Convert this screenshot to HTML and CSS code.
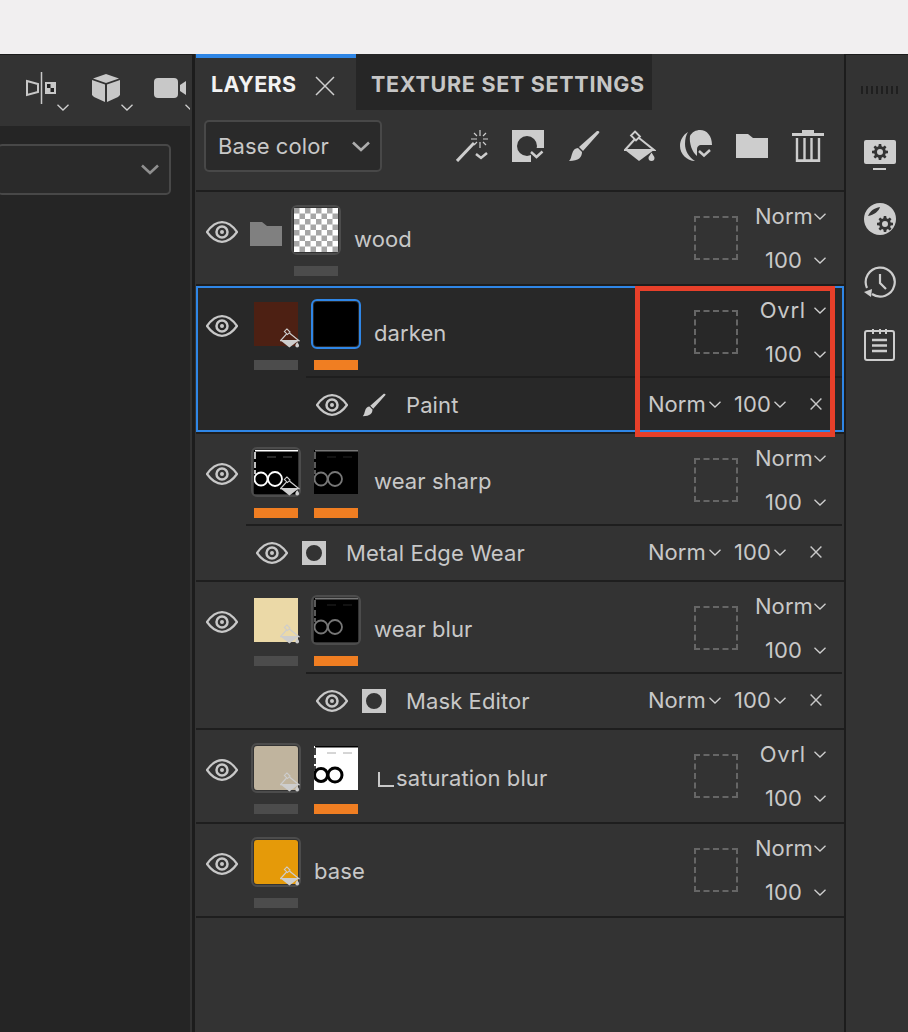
FILE: index.html
```html
<!DOCTYPE html>
<html lang="en">
<head>
	<meta charset="UTF-8">
	<title>Layers</title>
	<link rel="stylesheet" href="styles.css">
</head>
<body>
	<svg class="defs" width="0" height="0">
		<symbol id="chev" viewBox="0 0 12 7"><path d="M.5.8L6 6 11.500.8" fill="none" stroke="#cfcfcf" stroke-width="1.300"/></symbol>
		<symbol id="chev-bold" viewBox="0 0 18 11"><path d="M1 1.500l8 7.500 8-7.500" fill="none" stroke="currentColor" stroke-width="2.600"/></symbol>
		<symbol id="cross" viewBox="0 0 20 20"><path d="M1 1l18 18M19 1L1 19" fill="none" stroke="currentColor"/></symbol>
		<symbol id="eye" viewBox="0 0 32 22"><path d="M1 11C6 4 11 1.200 16 1.200S26 4 31 11C26 18 21 20.800 16 20.800S6 18 1 11Z" fill="none" stroke="#c8c8c8" stroke-width="2.200"/><circle cx="16" cy="11" r="5.500" fill="none" stroke="#c8c8c8" stroke-width="2.500"/><circle cx="16" cy="11" r="2" fill="#c8c8c8"/></symbol>
		<symbol id="folder" viewBox="0 0 32 24"><path d="M0 0h12l5 4h15v20H0Z"/></symbol>
		<symbol id="bucket" viewBox="0 0 32 32"><path d="M11 1.500l5 5-4 4-5-5Z" fill="none" stroke="#cdcdcd" stroke-width="1.800"/><path d="M11 9L1 20h29L15 8" fill="none" stroke="#cdcdcd" stroke-width="2"/><path d="M1 20h29L15 31Z" fill="#cdcdcd"/><path d="M27.500 22.500c1.500 2.500 3 4 3 5.500a3 3 0 0 1-6 0c0-1.500 1.500-3 3-5.500Z" fill="#cdcdcd"/></symbol>
		<symbol id="brush" viewBox="0 0 32 32"><path d="M30 1c1 0 2 1 1 2L15 21l-4-4L29 1Z" fill="#cdcdcd"/><path d="M10 18l4 4c0 5-3 9-13 9 2-2 2-4 3-7 1-4 3-6 6-6Z" fill="#cdcdcd"/></symbol>
		<symbol id="mask-ic" viewBox="0 0 24 24"><path fill-rule="evenodd" d="M0 0h24v24H0ZM12 4a8 8 0 1 0 0 16 8 8 0 0 0 0-16Z" fill="#c8c8c8"/></symbol>
		<symbol id="rings" viewBox="0 0 44 44"><rect class="rings-bg" width="44" height="44"/><path d="M1 .8h43M1 2v7M1 12v6M1 20v4" fill="none" stroke="currentColor" stroke-width="1.500"/><path d="M13 7h9M29 7h9" stroke="currentColor" stroke-width=".8" opacity=".4"/><circle class="ring" cx="7" cy="29" r="6.500"/><circle class="ring" cx="21" cy="29" r="7"/></symbol>
		<symbol id="checker" viewBox="0 0 44 44"><rect width="44" height="44" fill="#fff"/><path d="M0 0h5.500v5.500H0ZM11 0h5.500v5.500H11ZM22 0h5.500v5.500H22ZM33 0h5.500v5.500H33ZM5.500 5.500H11V11H5.500ZM16.500 5.500H22V11h-5.500ZM27.500 5.500H33V11h-5.500ZM38.500 5.500H44V11h-5.500ZM0 11h5.500v5.500H0ZM11 11h5.500v5.500H11ZM22 11h5.500v5.500H22ZM33 11h5.500v5.500H33ZM5.500 16.500H11V22H5.500ZM16.500 16.500H22V22h-5.500ZM27.500 16.500H33V22h-5.500ZM38.500 16.500H44V22h-5.500ZM0 22h5.500v5.500H0ZM11 22h5.500v5.500H11ZM22 22h5.500v5.500H22ZM33 22h5.500v5.500H33ZM5.500 27.500H11V33H5.500ZM16.500 27.500H22V33h-5.500ZM27.500 27.500H33V33h-5.500ZM38.500 27.500H44V33h-5.500ZM0 33h5.500v5.500H0ZM11 33h5.500v5.500H11ZM22 33h5.500v5.500H22ZM33 33h5.500v5.500H33ZM5.500 38.500H11V44H5.500ZM16.500 38.500H22V44h-5.500ZM27.500 38.500H33V44h-5.500ZM38.500 38.500H44V44h-5.500Z" fill="#a6a6a6"/></symbol>
		<symbol id="gear" viewBox="0 0 16 16"><path fill-rule="evenodd" d="M6.800 0h2.400l.4 2.300 1.300.6L12.800 1.500l1.700 1.700-1.400 1.900.6 1.300 2.300.4v2.400l-2.300.4-.6 1.300 1.400 1.900-1.700 1.700-1.900-1.400-1.300.6-.4 2.300H6.800l-.4-2.300-1.300-.6-1.900 1.400-1.700-1.700 1.400-1.900-.6-1.300L0 9.200V6.800l2.300-.4.6-1.300-1.400-1.900 1.700-1.700 1.900 1.400 1.300-.6ZM8 5a3 3 0 1 0 0 6 3 3 0 0 0 0-6Z"/></symbol>
	</svg>

	<div class="topbar"></div>

	<div class="app">
		<div class="side">
			<div class="side-tools">
				<span class="tool tool-split">
					<svg class="ic-split" viewBox="0 0 32 32"><path d="M1 9l11 3v8L1 23Z" fill="none" stroke="#c8c8c8" stroke-width="2"/><path d="M15.500 0v32" stroke="#c8c8c8" stroke-width="1.500"/><rect x="19" y="10" width="11" height="12" fill="#c8c8c8"/><path d="M21 12h3.500v4H21ZM24.500 16H28v4h-3.500Z" fill="#222"/></svg>
					<svg class="chev tool-chev"><use href="#chev"/></svg>
				</span>
				<span class="tool tool-cube">
					<svg class="ic-cube" viewBox="0 0 28 28"><path d="M14 0l13 4.500L14 9 1 4.500Z" fill="#c8c8c8"/><path d="M0 6l13 4.500V28L2 23 0 21ZM28 6l-13 4.500V28l11-5 2-2Z" fill="#c8c8c8"/></svg>
					<svg class="chev tool-chev"><use href="#chev"/></svg>
				</span>
				<span class="tool tool-cam">
					<svg class="ic-cam" viewBox="0 0 32 20"><rect width="24" height="20" rx="4" fill="#c8c8c8"/><path d="M26 7l6-4v14l-6-4Z" fill="#c8c8c8"/></svg>
					<svg class="chev tool-chev"><use href="#chev"/></svg>
				</span>
			</div>
			<div class="side-body">
				<div class="side-select"><svg class="sel-chev"><use href="#chev-bold"/></svg></div>
			</div>
		</div>

		<div class="panel">
			<div class="tabs">
				<div class="tab tab-on">LAYERS<svg class="tab-x"><use href="#cross"/></svg></div>
				<div class="tab tab-off">TEXTURE SET SETTINGS</div>
			</div>

			<div class="toolbar">
				<div class="channel">Base color<svg class="sel-chev"><use href="#chev-bold"/></svg></div>
				<div class="actions">
					<svg class="act" viewBox="0 0 32 32"><path d="M1 31L18 13" stroke="#cdcdcd" stroke-width="3"/><path d="M24 0v6M24 12v6M15 9h6M27 9h6M18 3l3 3M30 3l-3 3M18 15l3-3M30 15l-3-3" stroke="#cdcdcd" stroke-width="1.200"/><path d="M20 24l5 4 6-5" fill="none" stroke="#cdcdcd" stroke-width="2.500"/></svg>
					<svg class="act" viewBox="0 0 32 32"><rect width="32" height="32" fill="#cdcdcd"/><circle cx="15" cy="16" r="10" fill="#333"/><rect x="19" y="18" width="13" height="14" fill="#333"/><path d="M19 22l5.500 5 6-5.500" fill="none" stroke="#cdcdcd" stroke-width="2.500"/></svg>
					<svg class="act"><use href="#brush"/></svg>
					<svg class="act"><use href="#bucket"/></svg>
					<svg class="act" viewBox="0 0 32 32"><path d="M8 2C3 5 0 10 0 16c0 8 7 15 15 15C9 27 5 21 5 14 5 9 6 5 8 2Z" fill="#cdcdcd"/><path d="M10 6c2-4 6-6 10-6 7 0 12 6 12 15H22c-4 0-5 2-5 5v6C12 22 9 13 10 6Z" fill="#cdcdcd"/><path d="M19 21l5 4.500 6-5.500" fill="none" stroke="#cdcdcd" stroke-width="2.500"/></svg>
					<svg class="act act-folder"><use href="#folder"/></svg>
					<svg class="act" viewBox="0 0 32 32"><path d="M10 3V0h12v3h10v3H0V3Z" fill="#cdcdcd"/><path d="M5 8v23h22V8M12.500 8v23M19.500 8v23" fill="none" stroke="#cdcdcd" stroke-width="2.400"/><path d="M4 30.500h24" stroke="#cdcdcd" stroke-width="2.400"/></svg>
				</div>
			</div>

			<div class="layers">
				<div class="layer">
					<div class="layer-main">
						<svg class="eye"><use href="#eye"/></svg>
						<svg class="folder"><use href="#folder"/></svg>
						<div class="slot slot-folder">
							<div class="thumb framed"><svg class="thumb-art"><use href="#checker"/></svg></div>
							<div class="bar"></div>
						</div>
						<span class="name">wood</span>
						<div class="controls">
							<div class="dash"></div>
							<div class="blend">
								<div class="pick"><span>Norm</span><svg class="chev"><use href="#chev"/></svg></div>
								<div class="pick"><span>100</span><svg class="chev chev-far"><use href="#chev"/></svg></div>
							</div>
						</div>
					</div>
				</div>

				<div class="layer layer-sel has-sub">
					<div class="layer-main">
						<svg class="eye"><use href="#eye"/></svg>
						<div class="slot">
							<div class="thumb thumb-brown"><svg class="fill-ic"><use href="#bucket"/></svg></div>
							<div class="bar"></div>
						</div>
						<div class="slot">
							<div class="thumb thumb-black framed framed-on"></div>
							<div class="bar bar-on"></div>
						</div>
						<span class="name">darken</span>
						<div class="controls">
							<div class="dash"></div>
							<div class="blend">
								<div class="pick"><span class="ovrl">Ovrl</span><svg class="chev"><use href="#chev"/></svg></div>
								<div class="pick"><span>100</span><svg class="chev chev-far"><use href="#chev"/></svg></div>
							</div>
						</div>
					</div>
					<div class="sub sub-deep">
						<svg class="eye"><use href="#eye"/></svg>
						<svg class="sub-ic"><use href="#brush"/></svg>
						<span class="sub-name">Paint</span>
						<div class="sub-ctl">
							<div class="pick"><span>Norm</span><svg class="chev"><use href="#chev"/></svg></div>
							<div class="pick"><span>100</span><svg class="chev"><use href="#chev"/></svg></div>
							<svg class="sub-x"><use href="#cross"/></svg>
						</div>
					</div>
				</div>

				<div class="layer has-sub">
					<div class="layer-main">
						<svg class="eye"><use href="#eye"/></svg>
						<div class="slot">
							<div class="thumb framed thumb-white"><svg class="thumb-art"><use href="#rings"/></svg><svg class="fill-ic"><use href="#bucket"/></svg></div>
							<div class="bar bar-on"></div>
						</div>
						<div class="slot">
							<div class="thumb thumb-grey"><svg class="thumb-art"><use href="#rings"/></svg></div>
							<div class="bar bar-on"></div>
						</div>
						<span class="name">wear sharp</span>
						<div class="controls">
							<div class="dash"></div>
							<div class="blend">
								<div class="pick"><span>Norm</span><svg class="chev"><use href="#chev"/></svg></div>
								<div class="pick"><span>100</span><svg class="chev chev-far"><use href="#chev"/></svg></div>
							</div>
						</div>
					</div>
					<div class="sub sub-near">
						<svg class="eye"><use href="#eye"/></svg>
						<svg class="sub-ic"><use href="#mask-ic"/></svg>
						<span class="sub-name">Metal Edge Wear</span>
						<div class="sub-ctl">
							<div class="pick"><span>Norm</span><svg class="chev"><use href="#chev"/></svg></div>
							<div class="pick"><span>100</span><svg class="chev"><use href="#chev"/></svg></div>
							<svg class="sub-x"><use href="#cross"/></svg>
						</div>
					</div>
				</div>

				<div class="layer has-sub">
					<div class="layer-main">
						<svg class="eye"><use href="#eye"/></svg>
						<div class="slot">
							<div class="thumb thumb-cream"><svg class="fill-ic"><use href="#bucket"/></svg></div>
							<div class="bar"></div>
						</div>
						<div class="slot">
							<div class="thumb framed thumb-grey"><svg class="thumb-art"><use href="#rings"/></svg></div>
							<div class="bar bar-on"></div>
						</div>
						<span class="name">wear blur</span>
						<div class="controls">
							<div class="dash"></div>
							<div class="blend">
								<div class="pick"><span>Norm</span><svg class="chev"><use href="#chev"/></svg></div>
								<div class="pick"><span>100</span><svg class="chev chev-far"><use href="#chev"/></svg></div>
							</div>
						</div>
					</div>
					<div class="sub sub-deep">
						<svg class="eye"><use href="#eye"/></svg>
						<svg class="sub-ic"><use href="#mask-ic"/></svg>
						<span class="sub-name">Mask Editor</span>
						<div class="sub-ctl">
							<div class="pick"><span>Norm</span><svg class="chev"><use href="#chev"/></svg></div>
							<div class="pick"><span>100</span><svg class="chev"><use href="#chev"/></svg></div>
							<svg class="sub-x"><use href="#cross"/></svg>
						</div>
					</div>
				</div>

				<div class="layer">
					<div class="layer-main">
						<svg class="eye"><use href="#eye"/></svg>
						<div class="slot">
							<div class="thumb thumb-sand framed"><svg class="fill-ic"><use href="#bucket"/></svg></div>
							<div class="bar"></div>
						</div>
						<div class="slot">
							<div class="thumb thumb-inv"><svg class="thumb-art"><use href="#rings"/></svg></div>
							<div class="bar bar-on"></div>
						</div>
						<span class="name name-clip"><span class="clip"></span>saturation blur</span>
						<div class="controls">
							<div class="dash"></div>
							<div class="blend">
								<div class="pick"><span class="ovrl">Ovrl</span><svg class="chev"><use href="#chev"/></svg></div>
								<div class="pick"><span>100</span><svg class="chev chev-far"><use href="#chev"/></svg></div>
							</div>
						</div>
					</div>
				</div>

				<div class="layer">
					<div class="layer-main">
						<svg class="eye"><use href="#eye"/></svg>
						<div class="slot">
							<div class="thumb thumb-amber framed"><svg class="fill-ic"><use href="#bucket"/></svg></div>
							<div class="bar"></div>
						</div>
						<span class="name">base</span>
						<div class="controls">
							<div class="dash"></div>
							<div class="blend">
								<div class="pick"><span>Norm</span><svg class="chev"><use href="#chev"/></svg></div>
								<div class="pick"><span>100</span><svg class="chev chev-far"><use href="#chev"/></svg></div>
							</div>
						</div>
					</div>
				</div>
			</div>
		</div>

		<div class="rail">
			<div class="grip"></div>
			<svg class="rail-ic" viewBox="0 0 32 32"><rect width="32" height="24" rx="2" fill="#cdcdcd"/><rect x="9" y="28" width="13" height="2" fill="#cdcdcd"/><svg x="8" y="4" width="16" height="16" fill="#333"><use href="#gear"/></svg></svg>
			<svg class="rail-ic" viewBox="0 0 32 32"><circle cx="16" cy="16" r="16" fill="#cdcdcd"/><path d="M4 13c2-5 6-8 12-9-1 4-6 8-12 9Z" fill="#333"/><svg x="13" y="13" width="16" height="16" fill="#333"><use href="#gear"/></svg></svg>
			<svg class="rail-ic" viewBox="0 0 32 32"><path d="M3 22A14.500 14.500 0 1 1 8 28" fill="none" stroke="#cdcdcd" stroke-width="2.200"/><path d="M0 26l8-3-1 8Z" fill="#cdcdcd"/><path d="M16 8v9l6 6" fill="none" stroke="#cdcdcd" stroke-width="2.200"/></svg>
			<svg class="rail-ic" viewBox="0 0 32 32"><rect x="1" y="2" width="29" height="29" rx="2" fill="none" stroke="#cdcdcd" stroke-width="2"/><path d="M9 0v5M16 0v5M22 0v5" stroke="#cdcdcd" stroke-width="2"/><path d="M8 11h15M8 16.500h15M8 22h15" stroke="#cdcdcd" stroke-width="2.500"/></svg>
		</div>
	</div>

	<!-- annotation on top of the screenshot -->
	<div class="callout"></div>
</body>
</html>
```

FILE: styles.css
```css
* {
	box-sizing: border-box;
	margin: 0;
	padding: 0;
}

html,
body {
	height: 100%;
	overflow: hidden;
}

body {
	position: relative;
	display: flex;
	flex-direction: column;
	background: #333;
	color: #c8c8c8;
	font-family: Inter, "Noto Sans", "Liberation Sans", sans-serif;
	font-size: 22px;
	letter-spacing: .1px;
}

.defs {
	position: absolute;
}

.topbar {
	height: 54px;
	background: #f1eff0;
	flex: none;
}

.app {
	flex: 1;
	display: flex;
	border-top: 1px solid #1c1c1c;
	min-height: 0;
}

/* left panel, cut by the crop */
.side {
	width: 192px;
	display: flex;
	flex-direction: column;
	flex: none;
	border-right: 2px solid #333;
	overflow: hidden;
}

.side-tools {
	height: 71px;
	background: #333;
	display: flex;
	align-items: flex-start;
	padding: 17px 0 0 26px;
	flex: none;
}

.tool {
	position: relative;
	display: block;
	height: 40px;
	flex: none;
}

.tool-split {
	width: 66px;
}

.tool-cube {
	width: 62px;
}

.tool-cam {
	width: 30px;
}

.ic-split {
	width: 32px;
	height: 32px;
}

.ic-cube {
	width: 28px;
	height: 28px;
	margin-top: 2px;
}

.ic-cam {
	width: 32px;
	height: 20px;
	margin-top: 6px;
}

.tool-chev {
	position: absolute;
	left: 31px;
	top: 32px;
}

.tool-cube .tool-chev {
	left: 29px;
}

.side-body {
	flex: 1;
	background: #252525;
	padding-top: 18px;
}

.side-select {
	width: 174px;
	margin-left: -3px;
	height: 51px;
	border: 2px solid #484848;
	border-radius: 5px;
	background: #2a2a2a;
	color: #8f8f8f;
	display: flex;
	align-items: center;
	justify-content: flex-end;
	padding-right: 10px;
}

.sel-chev {
	width: 18px;
	height: 11px;
	flex: none;
}

/* layers panel */
.panel {
	width: 652px;
	flex: none;
	margin-top: -1px;
	border-left: 3px solid #1c1c1c;
	display: flex;
	flex-direction: column;
	background: #333;
	padding-left: 1px;
}

.tabs {
	display: flex;
	height: 56px;
	flex: none;
}

.tab {
	display: flex;
	align-items: center;
	font-weight: 700;
	font-size: 21.500px;
	height: 56px;
}

.tab-on {
	width: 160px;
	padding-left: 15px;
	color: #f2f2f2;
	letter-spacing: .3px;
	border-top: 4px solid #2f86e6;
}

.tab-x {
	width: 20px;
	height: 20px;
	margin: 3px 0 0 19px;
	color: #cfcfcf;
	stroke-width: 1.500;
	flex: none;
}

.tab-off {
	width: 296px;
	padding: 3px 0 0 15px;
	background: #262626;
	color: #c6c6c6;
	letter-spacing: .7px;
}

.toolbar {
	height: 82px;
	flex: none;
	display: flex;
	align-items: flex-start;
	padding: 10px 0 0 8px;
	border-bottom: 2px solid #1e1e1e;
}

.channel {
	width: 178px;
	height: 52px;
	border: 2px solid #484848;
	border-radius: 5px;
	background: #2a2a2a;
	color: #c8c8c8;
	display: flex;
	align-items: center;
	justify-content: space-between;
	padding: 0 10px 0 12px;
}

.channel .sel-chev {
	color: #adadad;
}

.actions {
	display: flex;
	gap: 24px;
	margin-left: 74px;
	padding-top: 10px;
}

.act {
	width: 32px;
	height: 32px;
	fill: #cdcdcd;
	flex: none;
}

.act-folder {
	height: 24px;
	margin-top: 4px;
}

/* layer rows */
.layers {
	display: flex;
	flex-direction: column;
}

.layer {
	border-bottom: 2px solid #1e1e1e;
}

.layer-sel {
	background: #282828;
	box-shadow: inset 0 0 0 2px #2f86e6;
}

.layer-main {
	display: flex;
	align-items: flex-start;
	height: 92px;
	padding: 16px 18px 0 10px;
}

.has-sub .layer-main {
	height: 90px;
}

.eye {
	width: 32px;
	height: 22px;
	margin-top: 13px;
	flex: none;
}

.folder {
	width: 32px;
	height: 24px;
	margin: 14px 0 0 12px;
	fill: #808080;
	flex: none;
}

.slot {
	width: 44px;
	margin-left: 16px;
	flex: none;
}

.slot-folder {
	margin-left: 12px;
}

.thumb {
	position: relative;
	width: 44px;
	height: 44px;
}

.framed {
	outline: 2.500px solid #4c4c4c;
	outline-offset: 1px;
	border-radius: 3px;
}

.framed-on {
	outline-color: #2f86e6;
}

.thumb-art {
	display: block;
	width: 44px;
	height: 44px;
}

.rings-bg {
	fill: var(--ring-bg, #000);
}

.ring {
	fill: none;
	stroke: currentColor;
	stroke-width: var(--ring-w, 1.800px);
}

.thumb-brown { background: #4d2013; }
.thumb-black { background: #000; }
.thumb-cream { background: #ebd9a7; }
.thumb-sand { background: #c0b49e; }
.thumb-amber { background: #e59a09; }
.thumb-white { color: #fff; }
.thumb-grey { color: #777; }

.thumb-inv {
	color: #000;
	--ring-bg: #fff;
	--ring-w: 3px;
}

.fill-ic {
	position: absolute;
	right: -2px;
	bottom: -2px;
	width: 20px;
	height: 20px;
}

.bar {
	height: 10px;
	margin-top: 14px;
	background: #4c4c4c;
}

.bar-on {
	background: #f07e22;
}

.name {
	margin: 17px 0 0 16px;
	line-height: 28px;
	white-space: nowrap;
}

.name-clip {
	display: flex;
	align-items: center;
	margin-top: 18px;
}

.clip {
	width: 16px;
	height: 15px;
	margin: 2px 2px 0 4px;
	border-left: 2px solid #c8c8c8;
	border-bottom: 2px solid #c8c8c8;
}

.controls {
	margin-left: auto;
	display: flex;
	align-items: flex-start;
}

.dash {
	width: 44px;
	height: 44px;
	margin-top: 8px;
	border: 2px dashed #666;
	flex: none;
}

.blend {
	width: 88px;
	display: flex;
	flex-direction: column;
	align-items: flex-end;
	gap: 16px;
	margin-top: -6px;
}

.pick {
	display: flex;
	align-items: center;
	height: 28px;
	gap: 3px;
}

.blend .pick {
	gap: 1px;
}

.ovrl {
	letter-spacing: .8px;
	margin-right: 7px;
}

.chev {
	width: 12px;
	height: 7px;
	flex: none;
}

.chev-far {
	margin-left: 11px;
}

/* effects under a layer */
.sub {
	display: flex;
	align-items: center;
	height: 56px;
	margin-right: 2px;
	border-top: 2px solid #1e1e1e;
	padding-right: 20px;
}

.sub-deep {
	margin-left: 110px;
	padding-left: 10px;
}

.sub-near {
	margin-left: 50px;
	padding-left: 10px;
}

.sub .eye {
	margin: 0;
}

.sub-ic {
	width: 24px;
	height: 24px;
	margin-left: 14px;
	flex: none;
}

.sub-name {
	margin-left: 20px;
	white-space: nowrap;
}

.sub-ctl {
	margin: -2px 0 0 auto;
	display: flex;
	align-items: center;
	gap: 13px;
}

.sub-x {
	width: 12px;
	height: 12px;
	margin-left: 11px;
	color: #c8c8c8;
	stroke-width: 2.400;
	flex: none;
}

/* right rail */
.rail {
	flex: 1;
	border-left: 2px solid #1c1c1c;
	display: flex;
	flex-direction: column;
	align-items: center;
	padding: 31px 0 0 5px;
}

.grip {
	width: 40px;
	height: 8px;
	margin: 0 0 46px 3px;
	background: repeating-linear-gradient(90deg, #1f1f1f 0 2px, transparent 2px 5px);
}

.rail-ic {
	width: 32px;
	height: 32px;
	flex: none;
	margin-bottom: 31px;
}

/* red annotation box */
.callout {
	position: absolute;
	left: 635px;
	top: 286px;
	width: 200px;
	height: 151px;
	border: 5px solid #e8402a;
}
```
